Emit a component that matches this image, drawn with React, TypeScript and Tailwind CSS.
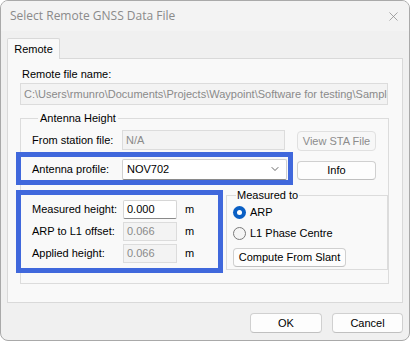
import { ChevronDown, X } from 'lucide-react'

const ui = { fontFamily: '"Liberation Sans", Arial, sans-serif' }

function Btn({ label, w, h = 20, disabled = false }: { label: string; w: number; h?: number; disabled?: boolean }) {
  return (
    <div
      className={`flex items-center justify-center rounded-[4px] border text-[11px] ${
        disabled ? 'border-[#e0e0e0] bg-[#f7f7f7] text-[#8c8c8c]' : 'border-[#d0d0d0] border-b-[#c0c0c0] bg-[#fdfdfd] text-black'
      }`}
      style={{ width: w, height: h }}
    >
      {label}
    </div>
  )
}

function Field({ value, w, h = 20, disabled = true }: { value: string; w: number; h?: number; disabled?: boolean }) {
  return (
    <div
      className={`flex items-center px-[3px] text-[11px] overflow-hidden whitespace-nowrap ${
        disabled ? 'border border-[#dcdcdc] bg-[#f3f3f3] text-[#8a8a8a]' : 'border border-[#d6d6d6] border-b-[#8a8a8a] bg-white text-black rounded-[2px]'
      }`}
      style={{ width: w, height: h }}
    >
      {value}
    </div>
  )
}

function Radio({ checked, label }: { checked: boolean; label: string }) {
  return (
    <div className="flex items-center h-[13px] gap-[4px] text-[11px] text-black">
      {checked ? (
        <div className="w-[13px] h-[13px] rounded-full bg-[#0a5fc4] flex items-center justify-center">
          <div className="w-[5px] h-[5px] rounded-full bg-white" />
        </div>
      ) : (
        <div className="w-[13px] h-[13px] rounded-full border border-[#7a7a7a] bg-[#f5f5f5]" />
      )}
      <span>{label}</span>
    </div>
  )
}

function HeightRow({ label, value, editable = false }: { label: string; value: string; editable?: boolean }) {
  return (
    <div className="flex items-center h-[19px]">
      <span className="w-[91px] text-[11px] text-black">{label}</span>
      <Field value={value} w={54} h={19} disabled={!editable} />
      <span className="ml-[8px] text-[11px] text-black">m</span>
    </div>
  )
}

export default function App() {
  return (
    <div className="w-[412px] h-[342px] bg-white relative" style={ui}>
      <div className="w-[410px] h-[341px] border border-[#a9a9a9] rounded-[8px] bg-[#f0f0f0] overflow-hidden flex flex-col">
        <div className="h-[30px] bg-[#f3f3f3] flex items-center pl-[9px] pr-[8px]">
          <span className="text-[12px] text-[#8a8a8a]" style={{ fontFamily: '"Open Sans", "Noto Sans", sans-serif' }}>
            Select Remote GNSS Data File
          </span>
          <X className="ml-auto text-[#8a8a8a]" size={15} strokeWidth={1.2} />
        </div>

        <div className="px-[6px] pt-[7px] flex flex-col">
          <div className="flex">
            <div className="h-[21px] w-[53px] border border-b-0 border-[#d9d9d9] bg-[#f9f9f9] flex items-center justify-center text-[11px] text-black rounded-t-[2px] -mb-px relative z-10">
              Remote
            </div>
          </div>
          <div className="h-[245px] w-[396px] border border-[#d9d9d9] bg-[#f9f9f9] pt-[9px] pl-[12px] flex flex-col">
            <div className="h-[13px] leading-[13px] text-[11px] text-black ml-[2px]">Remote file name:</div>
            <div className="mt-[2px]">
              <Field value={'C:\\Users\\rmunro\\Documents\\Projects\\Waypoint\\Software for testing\\Sample'} w={368} h={22} />
            </div>

            <fieldset className="mt-[7px] w-[369px] h-[172px] border border-[#dcdcdc] pl-[11px]">
              <legend className="ml-[6px] px-[2px] text-[11px] leading-[13px] text-black">Antenna Height</legend>

              <div className="mt-[4px] flex items-center">
                <span className="w-[90px] text-[11px] text-black">From station file:</span>
                <Field value="N/A" w={163} h={20} />
                <div className="ml-[12px] mt-[2px]">
                  <Btn label="View STA File" w={79} disabled />
                </div>
              </div>

              <div className="mt-[7px] flex items-center">
                <span className="w-[90px] text-[11px] text-black">Antenna profile:</span>
                <div className="w-[165px] h-[21px] border border-[#d0d0d0] border-b-[#8a8a8a] bg-white rounded-[2px] flex items-center pl-[4px] pr-[5px] text-[11px] text-black">
                  NOV702
                  <ChevronDown className="ml-auto text-[#333]" size={12} strokeWidth={1.5} />
                </div>
                <div className="ml-[10px] mt-[3px]">
                  <Btn label="Info" w={79} h={19} />
                </div>
              </div>

              <div className="mt-[9px] flex">
                <div className="flex flex-col gap-[3px] pt-[11px] w-[194px]">
                  <HeightRow label="Measured height:" value="0.000" editable />
                  <HeightRow label="ARP to L1 offset:" value="0.066" />
                  <HeightRow label="Applied height:" value="0.066" />
                </div>
                <fieldset className="w-[162px] h-[81px] border border-[#dcdcdc] pl-[6px]">
                  <legend className="ml-[3px] px-[1px] text-[11px] leading-[13px] text-black">Measured to</legend>
                  <div className="mt-[4px] flex flex-col gap-[8px]">
                    <Radio checked label="ARP" />
                    <Radio checked={false} label="L1 Phase Centre" />
                  </div>
                  <div className="mt-[8px]">
                    <Btn label="Compute From Slant" w={113} h={19} />
                  </div>
                </fieldset>
              </div>
            </fieldset>
          </div>

          <div className="mt-[10px] flex justify-end gap-[10px]">
            <Btn label="OK" w={72} />
            <Btn label="Cancel" w={71} />
          </div>
        </div>
      </div>

      {/* annotation boxes */}
      <div className="absolute left-[16px] top-[152px] w-[277px] h-[33px] border-[5px] border-[#4068dc]" />
      <div className="absolute left-[16px] top-[190px] w-[207px] h-[83px] border-[5px] border-[#4068dc]" />
    </div>
  )
}
